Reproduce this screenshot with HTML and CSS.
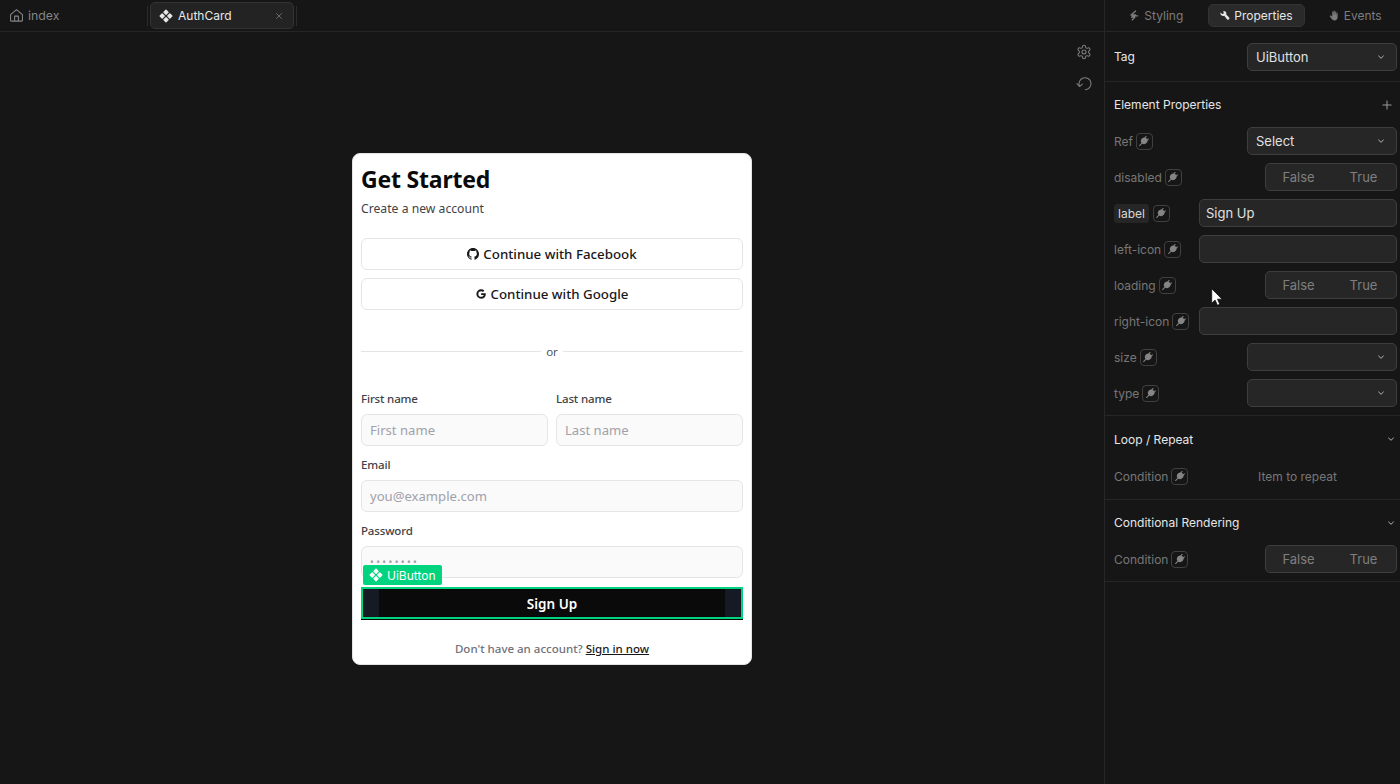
FILE: index.html
```html
<!DOCTYPE html>
<html lang="en">
<head>
<meta charset="utf-8">
<title>AuthCard</title>
<link rel="stylesheet" href="styles.css">
</head>
<body>
<svg class="defs" width="0" height="0" aria-hidden="true">
  <symbol id="i-comp" viewBox="0 0 14 14"><path d="M7 1.2 9 3.2 7 5.2 5 3.2ZM3.2 5 5.2 7 3.2 9 1.2 7ZM10.8 5 12.8 7 10.8 9 8.8 7ZM7 8.8 9 10.8 7 12.8 5 10.8Z" fill="currentColor" stroke="currentColor" stroke-width="1.4" stroke-linejoin="round"/></symbol>
  <symbol id="i-plug" viewBox="0 0 16 16"><path d="M8.6 3.9c1.7 0 3.5 1.8 3.5 3.6 0 2.2-1.9 4.2-4 4.2-2 0-3.8-1.7-3.8-3.7 0-2.2 2-4.1 4.3-4.1Z" fill="currentColor"/><path d="M5.4 10.8 3 13.2M8.8 4.6 10.4 2.8M11.2 7.2 13 5.6" stroke="currentColor" stroke-width="1.2" stroke-linecap="round"/></symbol>
  <symbol id="i-chev" viewBox="0 0 10 10"><path d="M2.6 4 5 6.3 7.4 4" fill="none" stroke="currentColor" stroke-width="1" stroke-linecap="round" stroke-linejoin="round"/></symbol>
</svg>

<main class="workspace">
  <nav class="tabbar">
    <div class="tab tab-index">
      <svg class="home" viewBox="0 0 24 24"><path d="M2.5 10.5 12 2.5l9.5 8V20a1 1 0 0 1-1 1h-17a1 1 0 0 1-1-1Z M9 21v-8h6v8" fill="none" stroke="currentColor" stroke-width="1.7" stroke-linejoin="round"/></svg>
      <span>index</span>
    </div>
    <span class="tab-sep"></span>
    <div class="tab tab-active">
      <svg class="comp-icon"><use href="#i-comp"/></svg>
      <span class="tab-name">AuthCard</span>
      <svg class="tab-close" viewBox="0 0 10 10"><path d="M1.5 1.5 8.5 8.5M8.5 1.5 1.5 8.5" stroke="currentColor" stroke-width="1"/></svg>
    </div>
    <span class="tab-sep"></span>
  </nav>

  <section class="canvas">
    <div class="canvas-tools">
      <svg class="tool" viewBox="0 0 24 24" fill="none" stroke="currentColor" stroke-width="1.6" stroke-linecap="round" stroke-linejoin="round"><path d="M12.22 2h-.44a2 2 0 0 0-2 2v.18a2 2 0 0 1-1 1.73l-.43.25a2 2 0 0 1-2 0l-.15-.08a2 2 0 0 0-2.73.73l-.22.38a2 2 0 0 0 .73 2.73l.15.1a2 2 0 0 1 1 1.72v.51a2 2 0 0 1-1 1.74l-.15.09a2 2 0 0 0-.73 2.73l.22.38a2 2 0 0 0 2.73.73l.15-.08a2 2 0 0 1 2 0l.43.25a2 2 0 0 1 1 1.73V20a2 2 0 0 0 2 2h.44a2 2 0 0 0 2-2v-.18a2 2 0 0 1 1-1.73l.43-.25a2 2 0 0 1 2 0l.15.08a2 2 0 0 0 2.73-.73l.22-.39a2 2 0 0 0-.73-2.73l-.15-.08a2 2 0 0 1-1-1.74v-.5a2 2 0 0 1 1-1.74l.15-.09a2 2 0 0 0 .73-2.73l-.22-.38a2 2 0 0 0-2.73-.73l-.15.08a2 2 0 0 1-2 0l-.43-.25a2 2 0 0 1-1-1.73V4a2 2 0 0 0-2-2z"/><circle cx="12" cy="12" r="3"/></svg>
      <svg class="tool" viewBox="0 0 24 24" fill="none" stroke="currentColor" stroke-width="1.6" stroke-linecap="round" stroke-linejoin="round"><path d="M5.4 15.5A9 9 0 1 1 14 20.6"/><path d="M1.5 11.5 5.4 15.8 9.5 12.2"/></svg>
    </div>

    <article class="card">
      <h1 class="card-title">Get Started</h1>
      <p class="card-sub">Create a new account</p>
      <button class="social first">
        <svg class="social-icon" viewBox="0 0 16 16"><path fill="currentColor" d="M8 0C3.58 0 0 3.58 0 8c0 3.54 2.29 6.53 5.47 7.59.4.07.55-.17.55-.38 0-.19-.01-.82-.01-1.49-2.01.37-2.53-.49-2.69-.94-.09-.23-.48-.94-.82-1.13-.28-.15-.68-.52-.01-.53.63-.01 1.08.58 1.23.82.72 1.21 1.87.87 2.33.66.07-.52.28-.87.51-1.07-1.78-.2-3.64-.89-3.64-3.95 0-.87.31-1.59.82-2.15-.08-.2-.36-1.02.08-2.12 0 0 .67-.21 2.2.82.64-.18 1.32-.27 2-.27s1.36.09 2 .27c1.53-1.04 2.2-.82 2.2-.82.44 1.1.16 1.92.08 2.12.51.56.82 1.27.82 2.15 0 3.07-1.87 3.75-3.65 3.95.29.25.54.73.54 1.48 0 1.07-.01 1.93-.01 2.2 0 .21.15.46.55.38A8.01 8.01 0 0 0 16 8c0-4.42-3.58-8-8-8z"/></svg>
        Continue with Facebook
      </button>
      <button class="social">
        <svg class="social-icon small" viewBox="0 0 16 16"><path fill="currentColor" d="M15.5 6.6H8.2v3h4.2c-.5 1.9-2.1 2.9-4.2 2.9A4.5 4.5 0 0 1 8.2 3.5c1.2 0 2.2.4 3 1.2l2.2-2.2A7.7 7.7 0 0 0 8.2.4a7.6 7.6 0 1 0 0 15.2c4.3 0 7.5-3 7.5-7.7 0-.5-.1-.9-.2-1.3Z"/></svg>
        Continue with Google
      </button>
      <div class="divider"><span>or</span></div>
      <div class="name-grid">
        <label class="field"><span class="field-label">First name</span><input class="text-input" placeholder="First name"></label>
        <label class="field"><span class="field-label">Last name</span><input class="text-input" placeholder="Last name"></label>
      </div>
      <label class="field stacked"><span class="field-label">Email</span><input class="text-input" placeholder="you@example.com"></label>
      <label class="field stacked"><span class="field-label">Password</span><input class="text-input password" placeholder="••••••••"></label>
      <div class="submit-wrap">
        <button class="submit"><span class="submit-pad"></span><span class="submit-text">Sign Up</span><span class="submit-pad"></span></button>
        <div class="sel-tag"><svg class="comp-icon"><use href="#i-comp"/></svg>UiButton</div>
      </div>
      <p class="card-foot">Don't have an account? <a class="foot-link">Sign in now</a></p>
    </article>
  </section>
</main>

<aside class="panel">
  <nav class="panel-tabs">
    <div class="ptab">
      <svg class="ptab-icon" viewBox="0 0 12 12"><path d="M7.6.8 2.2 5.4h5.4M10 6.4H4.4L2.8 7.8h3.6L3.2 11.2" fill="none" stroke="currentColor" stroke-width="1.5" stroke-linejoin="round"/></svg>Styling
    </div>
    <div class="ptab active">
      <svg class="ptab-icon" viewBox="0 0 12 12"><path d="M4.6 1a3 3 0 0 1 3.3 3.9l3.2 3.2c.5.5.5 1.2 0 1.7l-.6.6c-.5.4-1.1.4-1.6 0L5.7 6.2A3 3 0 0 1 1.6 2.6l2 1.8 1.3-.2.2-1.4Z" fill="currentColor"/></svg>Properties
    </div>
    <div class="ptab">
      <svg class="ptab-icon" viewBox="0 0 12 12"><path d="M5.6.6c.4 0 .7.3.7.7v3.6h.4V2.2c0-.8 1.2-.8 1.2 0v2.9h.4V3.4c0-.7 1.1-.7 1.1 0v4.2c0 2.2-1.4 3.8-3.5 3.8-1.6 0-2.5-.8-3.3-2L1 7c-.4-.7.4-1.4 1-.9l1.5 1.2V2.3c0-.8 1.2-.8 1.2 0v2.6h.2V1.3c0-.4.3-.7.7-.7Z" fill="currentColor"/></svg>Events
    </div>
  </nav>

  <section class="psec tag-sec">
    <div class="row">
      <span class="row-title">Tag</span>
      <div class="control select"><span>UiButton</span><svg class="chev"><use href="#i-chev"/></svg></div>
    </div>
  </section>

  <section class="psec props">
    <header class="sec-head">
      <span class="sec-title">Element Properties</span>
      <svg class="plus" viewBox="0 0 10 10"><path d="M5 .5v9M.5 5h9" stroke="currentColor" stroke-width="1"/></svg>
    </header>
    <div class="row"><span class="name">Ref</span><span class="bind"><svg><use href="#i-plug"/></svg></span>
      <div class="control select"><span>Select</span><svg class="chev"><use href="#i-chev"/></svg></div></div>
    <div class="row"><span class="name">disabled</span><span class="bind"><svg><use href="#i-plug"/></svg></span>
      <div class="control toggle"><span>False</span><span>True</span></div></div>
    <div class="row"><span class="name chip">label</span><span class="bind chip-bind"><svg><use href="#i-plug"/></svg></span>
      <div class="control wide"><span>Sign Up</span></div></div>
    <div class="row"><span class="name">left-icon</span><span class="bind"><svg><use href="#i-plug"/></svg></span>
      <div class="control wide"></div></div>
    <div class="row"><span class="name">loading</span><span class="bind"><svg><use href="#i-plug"/></svg></span>
      <div class="control toggle"><span>False</span><span>True</span></div></div>
    <div class="row"><span class="name">right-icon</span><span class="bind"><svg><use href="#i-plug"/></svg></span>
      <div class="control wide"></div></div>
    <div class="row"><span class="name">size</span><span class="bind"><svg><use href="#i-plug"/></svg></span>
      <div class="control select"><span></span><svg class="chev"><use href="#i-chev"/></svg></div></div>
    <div class="row"><span class="name">type</span><span class="bind"><svg><use href="#i-plug"/></svg></span>
      <div class="control select"><span></span><svg class="chev"><use href="#i-chev"/></svg></div></div>
  </section>

  <section class="psec loop">
    <header class="sec-head">
      <span class="sec-title">Loop / Repeat</span>
      <svg class="chev"><use href="#i-chev"/></svg>
    </header>
    <div class="row plain"><span class="name">Condition</span><span class="bind"><svg><use href="#i-plug"/></svg></span>
      <span class="repeat">Item to repeat</span></div>
  </section>

  <section class="psec cond">
    <header class="sec-head">
      <span class="sec-title">Conditional Rendering</span>
      <svg class="chev"><use href="#i-chev"/></svg>
    </header>
    <div class="row"><span class="name">Condition</span><span class="bind"><svg><use href="#i-plug"/></svg></span>
      <div class="control toggle"><span>False</span><span>True</span></div></div>
  </section>
</aside>

<svg class="cursor" viewBox="0 0 12 18"><path d="M.7.7v14.6l3.4-3.2 2.3 5.2 2.4-1-2.3-5.1h4.6Z" fill="#fff" stroke="#111" stroke-width=".8"/></svg>
</body>
</html>
```
FILE: styles.css
```css
* { box-sizing: border-box; }
html, body { height: 100%; }
body {
  margin: 0;
  display: flex;
  height: 784px;
  overflow: hidden;
  background: #161616;
  color: #e6e6e6;
  font-family: Inter, "Liberation Sans", sans-serif;
  font-size: 12px;
  position: relative;
}
.defs { position: absolute; }

/* Workspace */
.workspace { flex: 1; min-width: 0; display: flex; flex-direction: column; }
.tabbar {
  height: 32px;
  flex: none;
  display: flex;
  align-items: center;
  border-bottom: 1px solid #262626;
  padding-left: 9px;
}
.tab { display: flex; align-items: center; }
.tab-index { width: 138px; gap: 4px; color: #858585; font-size: 12.3px; }
.home { width: 15px; height: 15px; }
.tab-sep { width: 1px; height: 20px; background: #2c2c2c; }
.tab-active {
  width: 144px;
  height: 27px;
  margin: 0 2px;
  padding: 0 10px 0 8px;
  background: #232323;
  border: 1px solid #333;
  border-radius: 5px;
  color: #e8e8e8;
}
.comp-icon { width: 14px; height: 14px; flex: none; }
.tab-name { margin-left: 5px; flex: 1; }
.tab-close { width: 8px; height: 8px; color: #7a7a7a; }

/* Canvas */
.canvas {
  flex: 1;
  position: relative;
  display: flex;
  align-items: center;
  justify-content: center;
  padding-top: 2px;
}
.canvas-tools {
  position: absolute;
  top: 12px;
  right: 12px;
  display: flex;
  flex-direction: column;
  gap: 16px;
}
.tool { width: 16px; height: 16px; color: #7d7d7d; display: block; }

.card {
  width: 400px;
  background: #fff;
  border: 1px solid #e3e3e3;
  border-radius: 8px;
  padding: 8px 8px 6px;
  color: #0a0a0a;
  font-family: "Noto Sans", "Open Sans", sans-serif;
}
.card-title { margin: 0; font-size: 23px; letter-spacing: -.2px; line-height: 34px; font-weight: 700; }
.card-sub { margin: 3px 0 0; font-size: 12.2px; line-height: 20px; color: #3f3f46; }
.social {
  display: flex;
  align-items: center;
  justify-content: center;
  gap: 4px;
  width: 100%;
  height: 32px;
  margin-top: 8px;
  background: #fff;
  border: 1px solid #e5e5e5;
  border-radius: 6px;
  color: #18181b;
  font: 500 13.3px "Noto Sans", sans-serif;
}
.social.first { margin-top: 19px; }
.social-icon { width: 12px; height: 12px; }
.social-icon.small { width: 10px; height: 10px; margin-right: 1px; }
.divider {
  margin-top: 31px;
  height: 20px;
  display: flex;
  align-items: center;
  gap: 5px;
  font-size: 11.5px;
  color: #52525b;
}
.divider::before, .divider::after { content: ""; flex: 1; height: 1px; background: #e4e4e7; }
.name-grid { display: grid; grid-template-columns: 1fr 1fr; gap: 8px; margin-top: 28px; }
.field { display: flex; flex-direction: column; gap: 5px; }
.field.stacked { margin-top: 9px; }
.field-label { font-size: 11.5px; letter-spacing: -.15px; line-height: 20px; font-weight: 500; color: #3f3f46; }
.text-input {
  width: 100%;
  height: 32px;
  padding: 0 8px;
  background: #fafafa;
  border: 1px solid #e5e5e5;
  border-radius: 6px;
  font: 13.1px "Noto Sans", sans-serif;
  outline: none;
}
.text-input::placeholder { color: #a1a1aa; opacity: 1; }
.password { font-size: 10px; letter-spacing: 2.4px; }
.submit-wrap { position: relative; margin-top: 9px; }
.submit {
  display: flex;
  width: 100%;
  height: 32px;
  padding: 0;
  border: 2px solid #00d47f;
  background: #0a0a0a;
  color: #fff;
  font: 600 13.5px "Noto Sans", sans-serif;
  box-shadow: 0 1px 0 #0a0a0a;
}
.submit-pad { width: 16px; height: 100%; background: #151a25; }
.submit-text { flex: 1; line-height: 30px; }
.sel-tag {
  position: absolute;
  left: 2px;
  top: -22px;
  height: 20px;
  width: 79px;
  display: flex;
  align-items: center;
  gap: 4px;
  padding-left: 6px;
  background: #00d47f;
  border-radius: 2px;
  color: #fff;
  font: 12px Inter, sans-serif;
}
.card-foot {
  margin: 20px 0 0;
  text-align: center;
  font-size: 11.5px;
  line-height: 19px;
  font-weight: 500;
  color: #71717a;
}
.foot-link { color: #18181b; text-decoration: underline; }

/* Panel */
.panel { width: 296px; flex: none; border-left: 1px solid #262626; background: #161616; display: flex; flex-direction: column; }
.panel-tabs {
  height: 32px;
  flex: none;
  display: flex;
  align-items: center;
  justify-content: center;
  padding-left: 7px;
  border-bottom: 1px solid #262626;
  gap: 13px;
}
.ptab { display: flex; align-items: center; gap: 4px; height: 23px; padding: 0 11px 0 10px; color: #7c7c7c; border: 1px solid transparent; border-radius: 5px; }
.ptab.active { background: #2a2a2a; border-color: #333; color: #e6e6e6; }
.ptab-icon { width: 11px; height: 11px; }

.psec { border-bottom: 1px solid #262626; padding: 0 3px 0 9px; }
.tag-sec { height: 50px; display: flex; align-items: center; }
.tag-sec .row { flex: 1; height: 28px; margin: 0; }
.row-title { color: #e6e6e6; margin-right: auto; }
.row { display: flex; align-items: center; height: 28px; margin-bottom: 8px; }
.row:last-child { margin-bottom: 0; }
.name { color: #777; }
.name.chip { background: #262626; color: #d8d8d8; padding: 2px 4px; border-radius: 3px; }
.bind {
  margin-left: 3px;
  margin-right: auto;
  width: 17px;
  height: 17px;
  flex: none;
  border: 1px solid #404040;
  border-radius: 4px;
  color: #858585;
  display: flex;
  align-items: center;
  justify-content: center;
}
.bind.chip-bind { margin-left: 4px; }
.bind svg { width: 14px; height: 14px; }
.control {
  height: 28px;
  flex: none;
  display: flex;
  align-items: center;
  background: #262626;
  border: 1px solid #3e3e3e;
  border-radius: 5px;
  color: #e0e0e0;
  font-size: 13px;
  padding: 0 6px;
}
.select { width: 150px; justify-content: space-between; padding: 0 10px 0 8px; }
.toggle { width: 132px; padding: 0; color: #7f7f7f; }
.toggle span { flex: 1; text-align: center; }
.wide { width: 198px; }
.chev { width: 10px; height: 10px; color: #b5b5b5; flex: none; }
.props { height: 334px; }
.sec-head { display: flex; align-items: center; justify-content: space-between; padding-right: 1px; height: 45px; color: #e6e6e6; }
.plus { width: 10px; height: 10px; color: #9a9a9a; margin-right: 4px; }
.repeat { color: #777; margin-right: 60px; }
.loop { height: 84px; }
.loop .sec-head { height: 46px; }
.cond { height: 82px; }
.cond .sec-head { height: 45px; }

.cursor { position: absolute; left: 1211px; top: 288px; width: 12px; height: 18px; }
```
